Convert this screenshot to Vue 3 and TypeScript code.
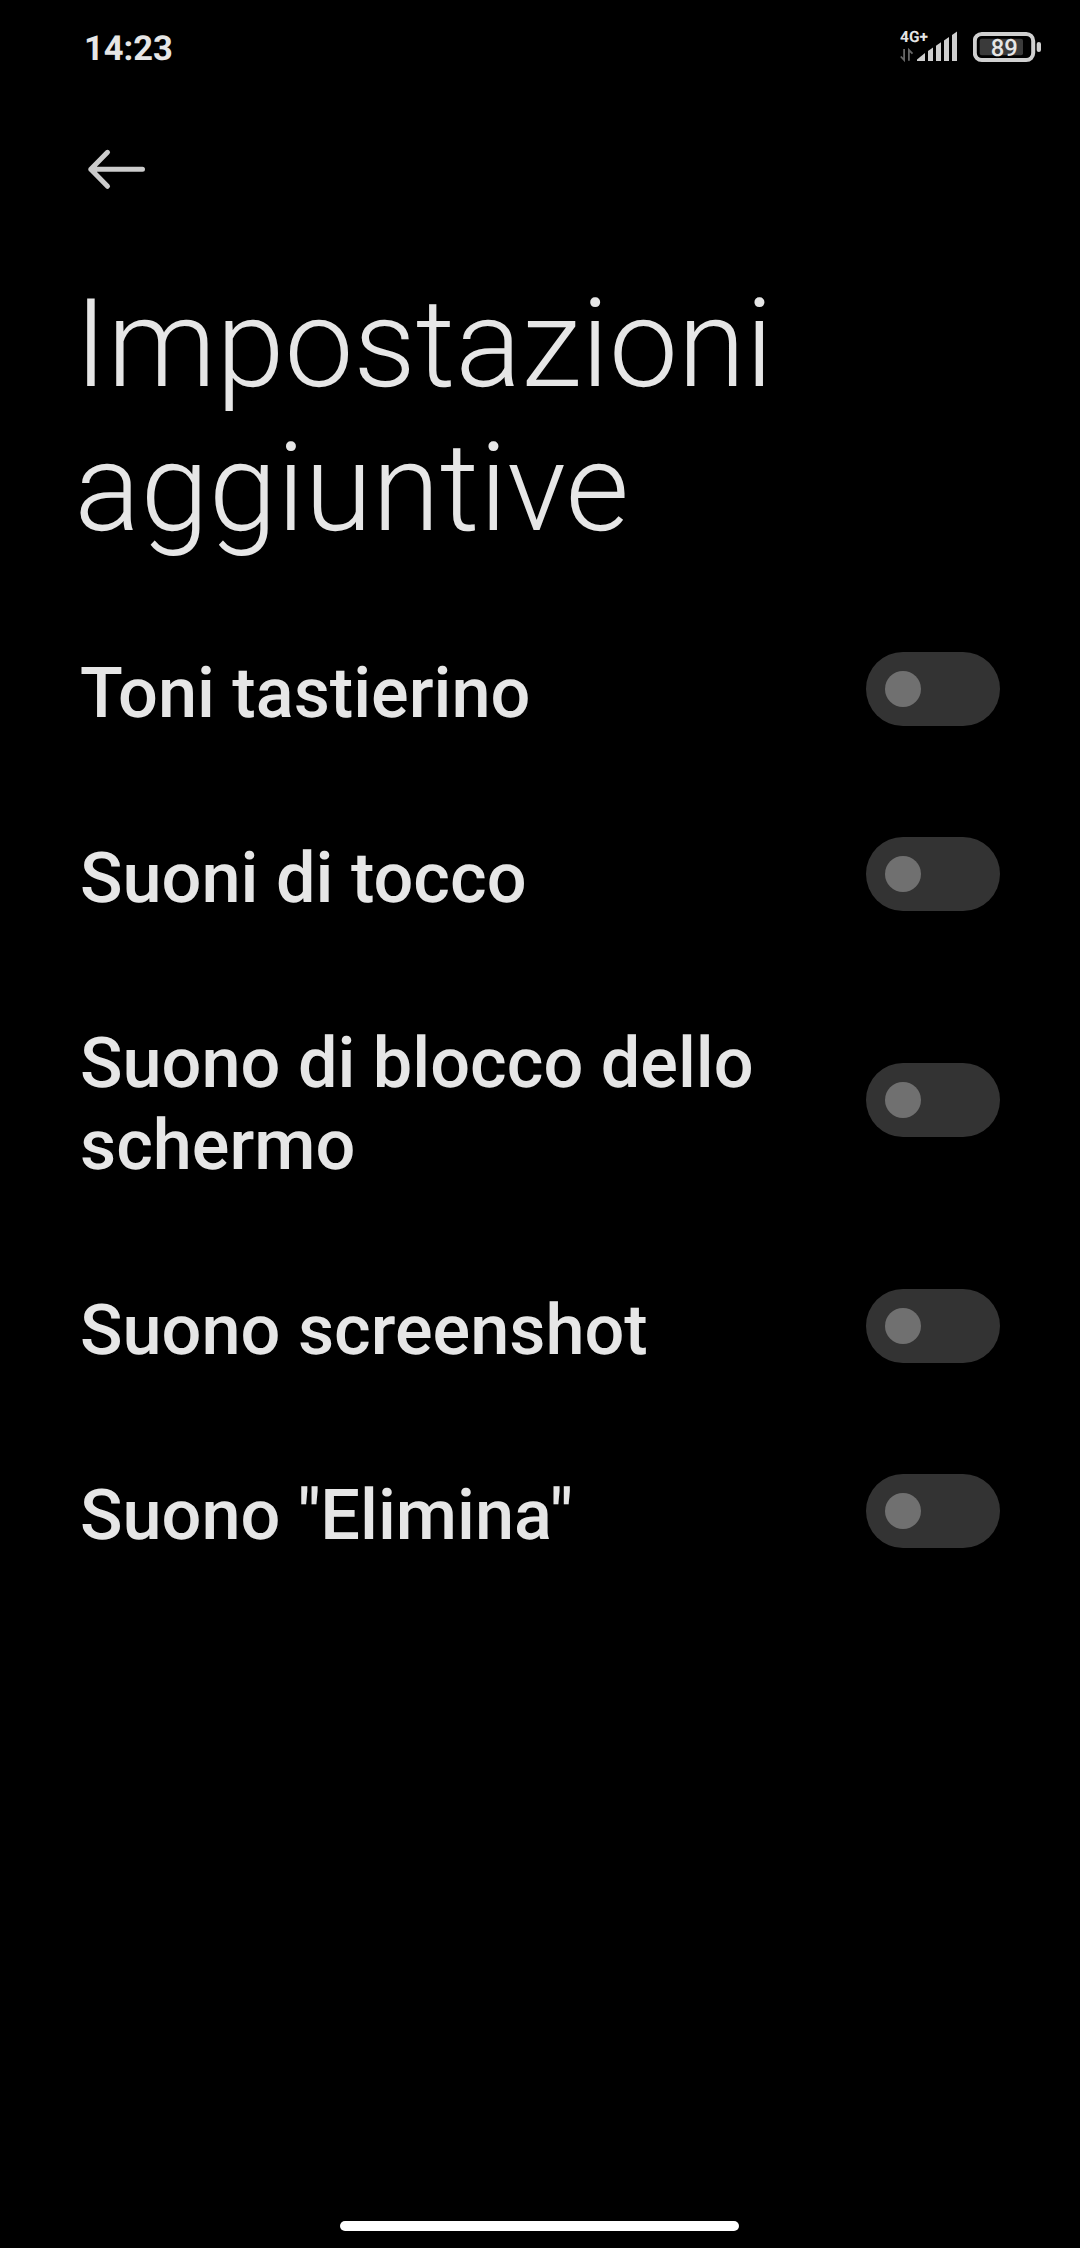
<script setup lang="ts">
import { ref } from 'vue'

interface Setting {
  label: string
  on: boolean
}

const settings = ref<Setting[]>([
  { label: 'Toni tastierino', on: false },
  { label: 'Suoni di tocco', on: false },
  { label: 'Suono di blocco dello schermo', on: false },
  { label: 'Suono screenshot', on: false },
  { label: 'Suono "Elimina"', on: false },
])
</script>

<template>
  <div class="screen">
    <header class="status">
      <span class="time">14:23</span>
      <div class="indicators">
        <svg class="signal" width="60" height="40" viewBox="0 -6 60 40">
          <text x="0" y="11.7" class="network">4G+</text>
          <g fill="none" stroke="#666" stroke-width="1.8">
            <path d="M4.100 19v11L0.800 26.500" />
            <path d="M8.900 30.700V20l3.600 3.700" />
          </g>
          <g fill="#cfcfcf">
            <path d="M17 31v-1.500l8-6.500v8z" />
            <path d="M28 31V21l5-3.500V31z" />
            <path d="M36 31V15.700l5-3.500V31z" />
            <path d="M44 31V10.500l5-3.500v24z" />
            <path d="M52 31V5l5-3.500V31z" />
          </g>
        </svg>
        <svg class="battery" width="70" height="40" viewBox="0 -6 70 40">
          <rect x="1.800" y="3.900" width="58.400" height="26.200" rx="7" fill="none" stroke="#d0d0d0" stroke-width="4" />
          <rect x="6.700" y="8.700" width="43.300" height="16.500" rx="2" fill="#3a3a3a" />
          <rect x="63.700" y="12" width="4.300" height="10" rx="2.100" fill="#d0d0d0" />
          <text x="31.200" y="26.300" text-anchor="middle" class="level">89</text>
        </svg>
      </div>
    </header>

    <nav class="toolbar">
      <svg width="60" height="42" viewBox="0 0 60 42" fill="none" stroke="#cccccc" stroke-width="5" stroke-linecap="round" stroke-linejoin="round">
        <path d="M21.500 4.300L4.800 21.300l16.700 17M4.800 21.300h51.700" />
      </svg>
    </nav>

    <h1 class="title">Impostazioni<br />aggiuntive</h1>

    <main class="list">
      <div v-for="item in settings" :key="item.label" class="row" @click="item.on = !item.on">
        <span class="label">{{ item.label }}</span>
        <span class="toggle" :class="{ on: item.on }"><span class="knob"></span></span>
      </div>
    </main>

    <div class="home"></div>
  </div>
</template>

<style>
body {
  margin: 0;
  background: #000;
}
</style>

<style scoped>
.screen {
  width: 1080px;
  height: 2248px;
  box-sizing: border-box;
  background: #000;
  color: #e6e6e6;
  font-family: Roboto, sans-serif;
  text-rendering: geometricPrecision;
  display: flex;
  flex-direction: column;
  overflow: hidden;
}
.status {
  height: 96px;
  box-sizing: border-box;
  padding: 24px 37px 0 84px;
  display: flex;
  justify-content: space-between;
  align-items: flex-start;
  flex: none;
}
.time {
  padding-top: 4px;
  font-size: 34.500px;
  font-weight: 700;
  line-height: 42px;
}
.indicators {
  display: flex;
  gap: 13px;
}
.signal,
.battery {
  display: block;
}
.network {
  font-size: 15.500px;
  font-weight: 700;
  fill: #e6e6e6;
}
.level {
  font-size: 23.800px;
  font-weight: 500;
  fill: #e6e6e6;
}
.toolbar {
  height: 177px;
  box-sizing: border-box;
  padding: 52px 0 0 86px;
  flex: none;
}
.toolbar svg {
  display: block;
}
.title {
  margin: 0 0 35.500px 74.500px;
  font-size: 123px;
  line-height: 144px;
  font-weight: 300;
  flex: none;
}
.list {
  display: flex;
  flex-direction: column;
  flex: 1;
}
.row {
  box-sizing: border-box;
  padding: 46.500px 80.300px 46.500px 80px;
  display: flex;
  align-items: center;
  justify-content: space-between;
}
.label {
  width: 700px;
  box-sizing: border-box;
  padding-top: 10px;
  font-size: 70.250px;
  line-height: 82px;
  font-weight: 500;
}
.toggle {
  width: 133.400px;
  height: 74px;
  box-sizing: border-box;
  padding: 19px;
  border-radius: 37px;
  background: #333;
  display: flex;
  flex: none;
}
.toggle.on {
  justify-content: flex-end;
  background: #0d84ff;
}
.knob {
  width: 36px;
  height: 36px;
  border-radius: 50%;
  background: #707070;
}
.toggle.on .knob {
  background: #fff;
}
.home {
  width: 399px;
  height: 10px;
  margin: 0 0 17px 340px;
  border-radius: 5px;
  background: #fff;
  flex: none;
}
</style>
